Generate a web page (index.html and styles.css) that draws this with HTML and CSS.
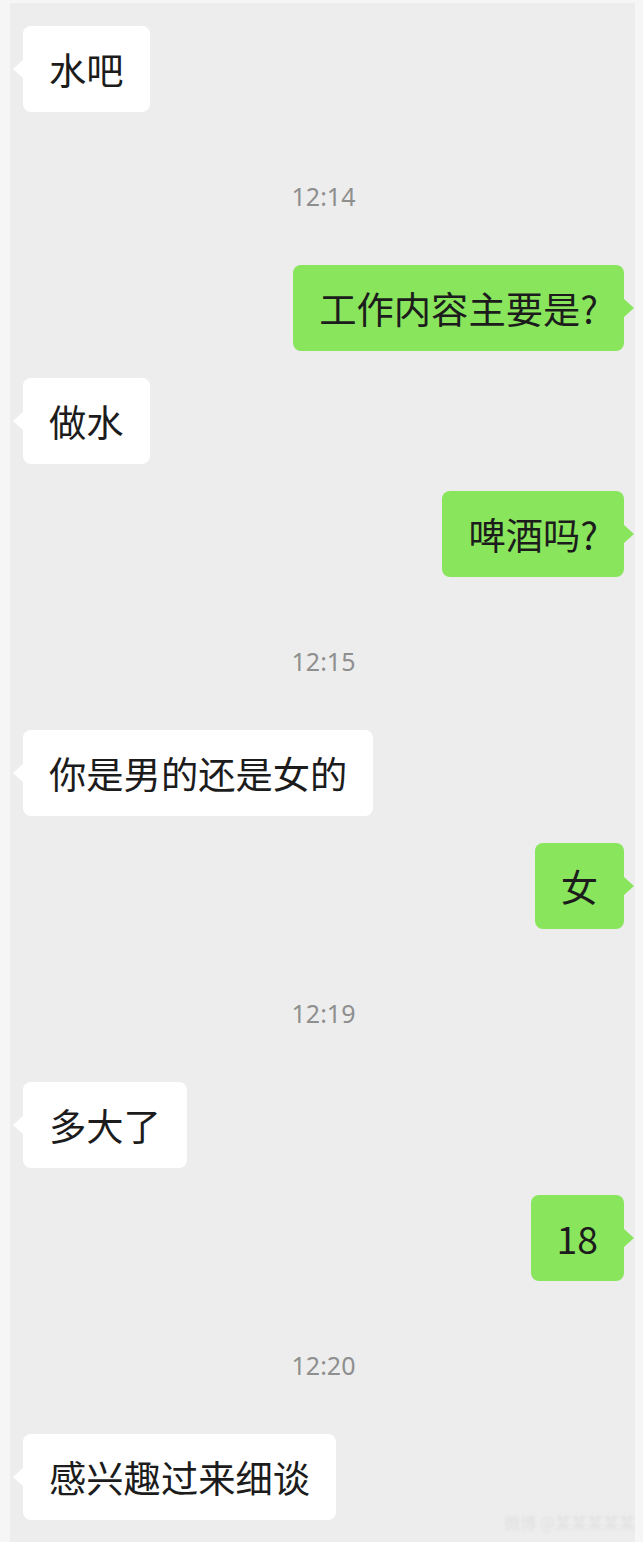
FILE: index.html
```html
<!DOCTYPE html>
<html lang="zh-CN">
<head>
  <meta charset="UTF-8">
  <title>聊天记录</title>
  <link rel="stylesheet" href="styles.css">
</head>
<body>
  <div class="chat">
    <div class="msg left"><div class="bubble">水吧</div></div>

    <div class="time">12:14</div>
    <div class="msg right"><div class="bubble">工作内容主要是?</div></div>
    <div class="msg left"><div class="bubble">做水</div></div>
    <div class="msg right"><div class="bubble">啤酒吗?</div></div>

    <div class="time">12:15</div>
    <div class="msg left"><div class="bubble">你是男的还是女的</div></div>
    <div class="msg right"><div class="bubble">女</div></div>

    <div class="time">12:19</div>
    <div class="msg left"><div class="bubble">多大了</div></div>
    <div class="msg right"><div class="bubble">18</div></div>

    <div class="time">12:20</div>
    <div class="msg left"><div class="bubble">感兴趣过来细谈</div></div>

    <div class="watermark">微博 @某某某某某</div>
  </div>
</body>
</html>
```

FILE: styles.css
```css
body {
  margin: 0;
  padding: 0;
  background: #f6f6f6;
  font-family: "Noto Sans CJK SC", "Noto Sans", sans-serif;
}

.chat {
  position: relative;
  display: flex;
  flex-direction: column;
  gap: 27px;
  min-height: 1539px;
  box-sizing: border-box;
  margin: 3px 8px 0 10px;
  padding: 23px 11px 0 13px;
  background: #ededed;
}

.msg {
  display: flex;
}

.msg.right {
  justify-content: flex-end;
}

.bubble {
  position: relative;
  padding: 23px 26px;
  font-size: 37.3px;
  line-height: 40px;
  color: #1c1c1c;
  border-radius: 8px;
  white-space: nowrap;
}

.left .bubble {
  background: #fff;
}

.right .bubble {
  background: #89e55c;
}

/* little tails on the bubbles */
.bubble::before {
  content: "";
  position: absolute;
  top: 50%;
  margin-top: -9px;
  border: 9px solid transparent;
}

.left .bubble::before {
  left: -19px;
  border-right: 10px solid #fff;
}

.right .bubble::before {
  right: -19px;
  border-left: 10px solid #89e55c;
}

.time {
  margin: 42px 0 27px;
  text-align: center;
  font-family: "Noto Sans", sans-serif;
  font-size: 25px;
  line-height: 30px;
  color: #8f8f8f;
}

.watermark {
  position: absolute;
  right: 0;
  bottom: 8px;
  font-size: 16px;
  color: #e0e0e0;
  filter: blur(1px);
}
```
